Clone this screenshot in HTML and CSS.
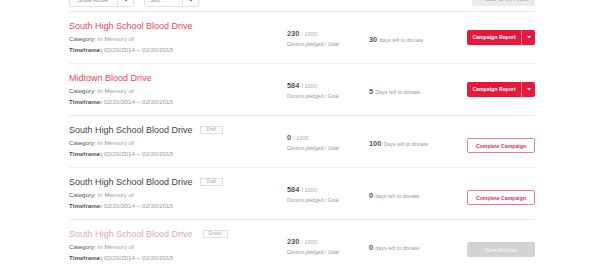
FILE: index.html
```html
<!DOCTYPE html>
<html lang="en">
<head>
<meta charset="utf-8">
<title>Campaigns</title>
<link rel="stylesheet" href="styles.css">
</head>
<body>
<div class="page">
  <div class="toolbar">
    <div class="filters">
      <div class="select select-active"><span class="select-label">Show Active</span><span class="select-caret"><svg width="4" height="3" viewBox="0 0 4 3"><path d="M0 0h4L2 2.5z" fill="#666"/></svg></span></div>
      <div class="select select-sort"><span class="select-label">Sort</span><span class="select-caret"><svg width="4" height="3" viewBox="0 0 4 3"><path d="M0 0h4L2 2.5z" fill="#666"/></svg></span></div>
    </div>
    <button class="btn-new">+ NEW CAMPAIGN</button>
  </div>

  <ul class="list">
    <li class="row">
      <div class="info">
        <div class="title title-active">South High School Blood Drive</div>
        <div class="meta"><span class="meta-label">Category:</span> In Memory of</div>
        <div class="meta"><span class="meta-label meta-strong">Timeframe:</span> 02/20/2014 ~ 02/30/2015</div>
      </div>
      <div class="stats">
        <div class="stats-line"><span class="num">230</span> <span class="goal">/ 1000</span></div>
        <div class="stats-sub">Donors pledged / Goal</div>
      </div>
      <div class="days"><span class="num">30</span> <span class="days-text">days left to donate</span></div>
      <div class="action">
        <div class="split">
          <button class="split-main">Campaign Report</button>
          <button class="split-toggle"><svg width="4" height="3" viewBox="0 0 4 3"><path d="M0 0h4L2 2.5z" fill="#fff"/></svg></button>
        </div>
      </div>
    </li>

    <li class="row">
      <div class="info">
        <div class="title title-active">Midtown Blood Drive</div>
        <div class="meta"><span class="meta-label">Category:</span> In Memory of</div>
        <div class="meta"><span class="meta-label meta-strong">Timeframe:</span> 02/20/2014 ~ 02/30/2015</div>
      </div>
      <div class="stats">
        <div class="stats-line"><span class="num">584</span> <span class="goal">/ 1000</span></div>
        <div class="stats-sub">Donors pledged / Goal</div>
      </div>
      <div class="days"><span class="num">5</span> <span class="days-text">Days left to donate</span></div>
      <div class="action">
        <div class="split">
          <button class="split-main">Campaign Report</button>
          <button class="split-toggle"><svg width="4" height="3" viewBox="0 0 4 3"><path d="M0 0h4L2 2.5z" fill="#fff"/></svg></button>
        </div>
      </div>
    </li>

    <li class="row">
      <div class="info">
        <div class="title">South High School Blood Drive<span class="badge">Draft</span></div>
        <div class="meta"><span class="meta-label">Category:</span> In Memory of</div>
        <div class="meta"><span class="meta-label meta-strong">Timeframe:</span> 02/20/2014 ~ 02/30/2015</div>
      </div>
      <div class="stats">
        <div class="stats-line"><span class="num">0</span> <span class="goal">/ 1000</span></div>
        <div class="stats-sub">Donors pledged / Goal</div>
      </div>
      <div class="days"><span class="num">100</span> <span class="days-text">Days left to donate</span></div>
      <div class="action"><button class="btn-outline">Complete Campaign</button></div>
    </li>

    <li class="row">
      <div class="info">
        <div class="title">South High School Blood Drive<span class="badge">Draft</span></div>
        <div class="meta"><span class="meta-label">Category:</span> In Memory of</div>
        <div class="meta"><span class="meta-label meta-strong">Timeframe:</span> 02/20/2014 ~ 02/30/2015</div>
      </div>
      <div class="stats">
        <div class="stats-line"><span class="num">584</span> <span class="goal">/ 1000</span></div>
        <div class="stats-sub">Donors pledged / Goal</div>
      </div>
      <div class="days"><span class="num">0</span> <span class="days-text">days left to donate</span></div>
      <div class="action"><button class="btn-outline">Complete Campaign</button></div>
    </li>

    <li class="row">
      <div class="info">
        <div class="title title-ended">South High School Blood Drive<span class="badge badge-ended">Ended</span></div>
        <div class="meta"><span class="meta-label">Category:</span> In Memory of</div>
        <div class="meta"><span class="meta-label meta-strong">Timeframe:</span> 02/20/2014 ~ 02/30/2015</div>
      </div>
      <div class="stats">
        <div class="stats-line"><span class="num">230</span> <span class="goal">/ 1000</span></div>
        <div class="stats-sub">Donors pledged / Goal</div>
      </div>
      <div class="days"><span class="num">0</span> <span class="days-text">days left to donate</span></div>
      <div class="action"><button class="btn-archive">View Archive</button></div>
    </li>
  </ul>
</div>
</body>
</html>
```

FILE: styles.css
```css
html, body {
  margin: 0;
  padding: 0;
  background: #ffffff;
}

body {
  font-family: "Liberation Sans", Arial, sans-serif;
  color: #444444;
}

.page {
  width: 466px;
  margin: 0 auto;
  display: flow-root;
}

/* toolbar */
.toolbar {
  display: flex;
  justify-content: space-between;
  align-items: flex-start;
  height: 19px;
  margin-top: -8px;
}

.filters {
  display: flex;
  gap: 10px;
  margin-top: 1px;
}

.select {
  display: flex;
  height: 14px;
  box-sizing: border-box;
  border: 1px solid #e2e2e2;
  border-radius: 2px;
  font-size: 5.5px;
  color: #888888;
}

.select-label {
  display: flex;
  align-items: center;
  padding-left: 8px;
}

.select-active .select-label { width: 39px; }
.select-sort .select-label { width: 32px; padding-left: 5px; }

.select-caret {
  display: flex;
  align-items: center;
  justify-content: center;
  width: 15px;
  border-left: 1px solid #e2e2e2;
}

.btn-new {
  width: 63px;
  height: 14px;
  border: 0;
  border-radius: 1px;
  padding: 0;
  background: #ebebeb;
  color: #999999;
  font-family: inherit;
  font-size: 5.5px;
}

/* list */
.list {
  list-style: none;
  margin: 0;
  padding: 0;
}

.row {
  display: grid;
  grid-template-columns: 218px 82px 98px 68px;
  align-items: start;
  height: 52px;
  box-sizing: border-box;
  border-top: 1px solid #eeeeee;
}

.info {
  padding-top: 8px;
}

.title {
  display: flex;
  align-items: center;
  font-size: 9px;
  line-height: 12px;
  color: #444444;
  white-space: nowrap;
}

.title-active { color: #e8475c; }
.title-ended { color: #dba6b0; }

.badge {
  display: inline-flex;
  align-items: center;
  height: 8px;
  box-sizing: border-box;
  margin-left: 7px;
  padding: 0 6px;
  border: 1px solid #dddddd;
  font-size: 4.5px;
  color: #aaaaaa;
}

.badge-ended { margin-left: 10px; padding: 0 5px; }

.meta {
  font-size: 6.2px;
  line-height: 10.5px;
  color: #999999;
  white-space: nowrap;
}

.title + .meta { margin-top: 2px; }

.meta-label {
  color: #555555;
}

.meta-strong {
  font-weight: bold;
}

.stats {
  padding-top: 17px;
}

.stats-line {
  font-size: 7.4px;
  line-height: 9px;
  white-space: nowrap;
}

.num {
  font-size: 7.4px;
  font-weight: bold;
  color: #555555;
}

.goal {
  font-size: 5.5px;
  color: #aaaaaa;
}

.stats-sub {
  margin-top: 1px;
  font-size: 5.2px;
  line-height: 8px;
  color: #999999;
  white-space: nowrap;
}

.days {
  padding-top: 23px;
  font-size: 7.4px;
  line-height: 9px;
  white-space: nowrap;
}

.days-text {
  font-size: 5.4px;
  color: #999999;
}

.action {
  padding-top: 17.5px;
}

.split {
  display: flex;
  height: 15px;
  border-radius: 2px;
  overflow: hidden;
  background: #e6193c;
}

.split-main,
.split-toggle,
.btn-outline,
.btn-archive {
  margin: 0;
  padding: 0;
  border: 0;
  font-family: inherit;
  font-size: 5.2px;
  font-weight: bold;
  cursor: pointer;
}

.split-main {
  width: 54px;
  background: transparent;
  color: #ffffff;
}

.split-toggle {
  display: flex;
  align-items: center;
  justify-content: center;
  width: 14px;
  background: transparent;
  border-left: 1px solid rgba(255, 255, 255, 0.45);
}

.btn-outline {
  width: 68px;
  height: 15px;
  box-sizing: border-box;
  border: 1px solid #e8808f;
  border-radius: 2px;
  background: #ffffff;
  color: #e2304c;
}

.btn-archive {
  width: 68px;
  height: 15px;
  border-radius: 2px;
  background: #d3d3d3;
  color: #f4f4f4;
}
```
